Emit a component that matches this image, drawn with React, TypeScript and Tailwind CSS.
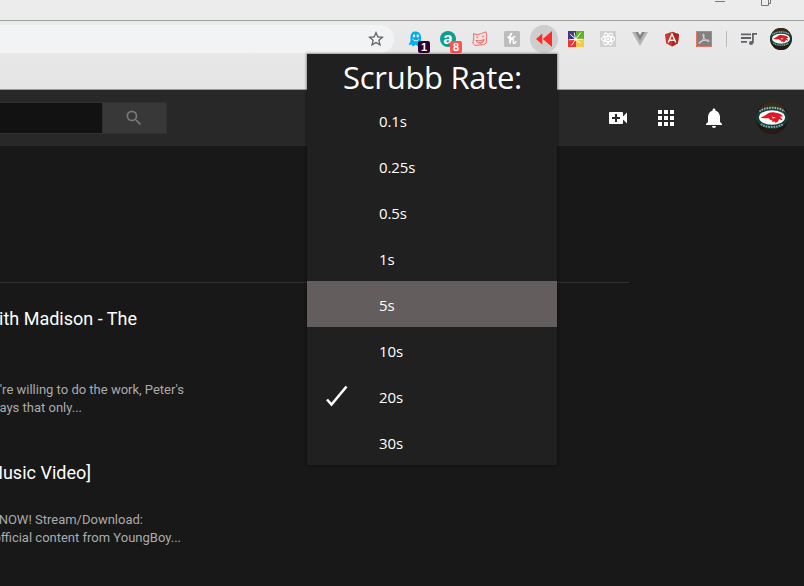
import React from 'react';

const rates = ['0.1s', '0.25s', '0.5s', '1s', '5s', '10s', '20s', '30s'];

function Slot({ children }: { children: React.ReactNode }) {
  return <div className="relative flex h-8 w-8 shrink-0 items-center justify-center">{children}</div>;
}

function Badge({ label, className }: { label: string; className: string }) {
  return (
    <span
      className={`absolute top-[18px] left-[18px] flex h-3 w-3 items-center justify-center rounded-[2px] font-['Liberation_Sans',sans-serif] text-[11px] leading-none font-bold text-white ${className}`}
    >
      {label}
    </span>
  );
}

function Avatar({ size }: { size: number }) {
  return (
    <svg width={size} height={size} viewBox="0 0 32 32" className="shrink-0">
      <defs>
        <clipPath id={`round-${size}`}>
          <circle cx="16" cy="16" r="16" />
        </clipPath>
      </defs>
      <g clipPath={`url(#round-${size})`}>
        <rect width="32" height="32" fill="#20140e" />
        <path d="M9 0h15l5 7H3z" fill="#3d2b17" />
        <path d="M5 27h22l-4 5H8z" fill="#2c1a12" />
        <ellipse cx="16" cy="15.500" rx="16" ry="11.500" fill="#123f3b" />
        <path d="M3.500 9.500C9 4.500 23 4.500 28.500 9.500" fill="none" stroke="#9fb1ab" strokeWidth="2" strokeDasharray="1.700 .9" />
        <path d="M5 22C10 26 22 26 27 22" fill="none" stroke="#8fa39d" strokeWidth="2" strokeDasharray="1.700 .9" />
        <ellipse cx="16" cy="15.500" rx="13" ry="7.300" fill="#fbfbf8" />
        <path
          d="M4.500 15.500c2-.5 4-1.500 6-3 2-2 5-2.500 8-2 4 .3 7 1.500 8.500 4l-3.500.3c1.500.7 2.500 1.800 3 3.700l-3.500-1.500c-.3 2-1.500 3-3.500 4l-.5-1.500-3 .5.500-1.500c-2 0-2.500-1.500-4.500-2.500-2 .5-5 .5-7.500-.5z"
          fill="#df1726"
        />
        <path d="m15.500 14.500 4.500 1.300-3 .8z" fill="#fff" />
      </g>
    </svg>
  );
}

function Toolbar() {
  return (
    <div className="flex h-9 items-center">
      <div className="flex h-7 w-[394px] shrink-0 items-center justify-end rounded-r-full bg-[#f1f3f4] pr-[10px]">
        <svg width="16" height="16" viewBox="2 2 20 20" fill="#5f6368">
          <path d="m22 9.24-7.19-.62L12 2 9.19 8.63 2 9.24l5.46 4.73L5.82 21 12 17.27 18.18 21l-1.63-7.03L22 9.24zM12 15.4l-3.76 2.27 1-4.28-3.32-2.88 4.38-.38L12 6.1l1.71 4.04 4.38.38-3.32 2.88 1 4.28L12 15.4z" />
        </svg>
      </div>
      <div className="ml-[6px] flex">
        <Slot>
          <svg width="16" height="16" viewBox="0 0 16 16">
            <path d="M2.500 6c0-3.600 2-5.600 5-5.600S13 2.500 13 6v4l2 4-3-.6-2 1.800-2.500-1.500L5 15.500 3.500 13.500.500 14l2-4z" fill="#00aef0" />
            <ellipse cx="6" cy="4.800" rx="1.200" ry="1.600" fill="#fff" />
            <ellipse cx="9.800" cy="4.800" rx="1.200" ry="1.600" fill="#fff" />
            <path d="M4.800 8.200c1.500 2.200 4.800 2.200 6.200 0" fill="none" stroke="#fff" strokeWidth="1" />
          </svg>
          <Badge label="1" className="bg-[#300033]" />
        </Slot>
        <Slot>
          <span className="flex h-4 w-4 items-center justify-center rounded-full bg-[#0c9f8d] pb-[2px] font-['Liberation_Sans',sans-serif] text-[17px] leading-none font-bold text-white">
            a
          </span>
          <Badge label="8" className="bg-[#ff5252]" />
        </Slot>
        <Slot>
          <svg width="16" height="16" viewBox="0 0 16 16" fill="none" stroke="#e5706c" strokeWidth="1">
            <path d="M1.500 2.500 5 3.800l4.500-1.300L14 .8l.8 4-.6 7.200-2 1.500L3 14.500.8 12l1-5z" fill="#f6dedd" />
            <path d="M4.500 6.500 6 6.200m4.200-.6 1.600-.4" strokeWidth="1.300" />
            <path d="M4 9.300c2.200 1 5.500.5 8-.8-.2 4.200-6.300 5.300-8 .8z" fill="#e5706c" />
            <path d="M5.500 10.700c1.700.3 3.500.1 5-.7" stroke="#fff" strokeWidth=".8" />
          </svg>
        </Slot>
        <Slot>
          <svg width="16" height="16" viewBox="0 0 16 16">
            <rect width="16" height="16" rx="1.500" fill="#bdbdbd" />
            <path d="M4 6.200C6 5.500 8.200 2.700 7.200 2.400 6 2.300 6 8 5.800 12.600c.4-2.400 1.500-4.900 2.900-4.800 1.800.2-.3 4.600 1 4.800.9.100 1.700-.9 2.300-2M5 7.200c2 .2 4.500-.3 5.800-1.600" fill="none" stroke="#fff" strokeWidth="1.400" strokeLinecap="round" />
          </svg>
        </Slot>
        <Slot>
          <span className="flex h-7 w-7 items-center justify-center rounded-full bg-[#cecece]">
            <svg width="16" height="16" viewBox="0 0 16 16" fill="#ff2a2a">
              <path d="M0 8l6.300-5.500v11zM6.800 8 16 0v16z" />
            </svg>
          </span>
        </Slot>
        <Slot>
          <svg width="16" height="16" viewBox="0 0 16 16">
            <path d="M0 0h8v8H0z" fill="#463883" />
            <path d="M8 0h8v8H8z" fill="#5fb42c" />
            <path d="M0 8h8v8H0z" fill="#ef3434" />
            <path d="M8 8h8v8H8z" fill="#f4c94f" />
            <path d="M7.500 8 6.300 2M7 7.500 2.500 3.500M7 8.300 1.500 8.800M8 8l4.500-6M8 8.500l6.500-.3M8 8.500l4 3.300M7.500 8.500 3.800 14" stroke="#fff" strokeWidth="1" strokeLinecap="round" />
            <circle cx="7.500" cy="8.300" r="1.500" fill="#fff" />
          </svg>
        </Slot>
        <Slot>
          <svg width="16" height="16" viewBox="0 0 16 16" fill="none" stroke="#fff" strokeWidth="1.100">
            <rect width="16" height="16" fill="#d0d0d0" stroke="none" />
            <ellipse cx="8" cy="8" rx="6.500" ry="2.600" />
            <ellipse cx="8" cy="8" rx="6.500" ry="2.600" transform="rotate(60 8 8)" />
            <ellipse cx="8" cy="8" rx="6.500" ry="2.600" transform="rotate(120 8 8)" />
            <circle cx="8" cy="8" r="1.200" fill="#fff" stroke="none" />
          </svg>
        </Slot>
        <Slot>
          <svg width="16" height="14" viewBox="0 0 16 14">
            <path d="M0 0h6l2 3.500L10 0h6L8 14z" fill="#b5b5b5" />
            <path d="M3.200 0H6l2 3.500L10 0h2.800L8 8.500z" fill="#858585" />
          </svg>
        </Slot>
        <Slot>
          <svg width="16" height="16" viewBox="0 0 16 16">
            <path d="M8 .7 15 3.200l-1.100 9L8 15.500l-5.900-3.300L1 3.200z" fill="#c9372f" />
            <path d="M8 .7 15 3.200l-1.100 9L8 15.500z" fill="#aa2821" />
            <path d="M4.200 11.500 8 3l3.800 8.500M5.800 9.200h4.400" fill="none" stroke="#f4eeee" strokeWidth="1.500" />
          </svg>
        </Slot>
        <Slot>
          <svg width="16" height="16" viewBox="0 0 16 16">
            <rect x=".5" y=".5" width="15" height="15" fill="#847f7f" stroke="#e27464" />
            <path d="M3.300 12.500C5 12 8.500 7 8 4c-.3-1.800-1.500-1-1 .7.800 3 3.500 5.800 5.700 5.700 1.200-.3.400-1.500-1.200-1.400-3 .1-6 .8-8 2.200-1 .9-.8 1.300-.2 1.300z" fill="none" stroke="#ddd" strokeWidth="1" />
          </svg>
        </Slot>
      </div>
      <div className="ml-[6px] h-4 w-px bg-[#bcbcbc]" />
      <svg className="ml-[13px]" width="18" height="18" viewBox="0 0 18 18" fill="none" stroke="#5f6368" strokeWidth="1.800">
        <path d="M1 4.300h10M1 8h10M1 11.800h6M12.900 13V3.900H17" />
        <circle cx="11.100" cy="13" r="2.100" fill="#5f6368" stroke="none" />
      </svg>
      <div className="ml-3"><Avatar size={22} /></div>
    </div>
  );
}

function BrowserChrome() {
  return (
    <header className="h-[90px] border-b border-[#999b99] bg-[#e5e5e5]">
      <div className="flex h-[21px] items-start border-b border-[#9ea09e] bg-[#ececec] pl-[715px]">
        <div className="mt-px h-px w-[10px] bg-[#777]" />
        <svg className="ml-9" width="10" height="6" viewBox="0 0 10 6" fill="none" stroke="#777">
          <path d="M.5 0v5.500h7V0M9.500 0v3.500h-2" />
        </svg>
      </div>
      <div className="h-[68px] bg-linear-to-b from-[#ebebeb] to-[#e4e4e4]"><Toolbar /></div>
    </header>
  );
}

function SiteHeader() {
  return (
    <div className="flex h-14 items-center bg-[#282828]">
      <div className="h-8 w-[102px] border-y border-[#303030] bg-[#121212]" />
      <button className="flex h-8 w-[65px] items-center justify-center border border-[#303030] bg-[#383838] pr-[2px]">
        <svg width="20" height="20" viewBox="0 0 24 24" fill="#777">
          <path d="M15.500 14h-.79l-.28-.27A6.471 6.471 0 0 0 16 9.500 6.500 6.500 0 1 0 9.500 16c1.610 0 3.090-.59 4.230-1.570l.27.28v.79l5 4.990L20.490 19l-4.990-5zm-6 0C7.010 14 5 11.990 5 9.500S7.010 5 9.500 5 14 7.010 14 9.500 11.990 14 9.500 14z" />
        </svg>
      </button>
      <div className="ml-auto flex items-center gap-6 pr-4">
        <svg width="24" height="24" viewBox="0 0 24 24" fill="#fff">
          <path d="M17 10.500V7c0-.55-.45-1-1-1H4c-.55 0-1 .45-1 1v10c0 .55.45 1 1 1h12c.55 0 1-.45 1-1v-3.500l4 4v-11l-4 4zM14 13h-3v3H9v-3H6v-2h3V8h2v3h3v2z" />
        </svg>
        <svg width="24" height="24" viewBox="0 0 24 24" fill="#fff">
          <path d="M4 8h4V4H4v4zm6 12h4v-4h-4v4zm-6 0h4v-4H4v4zm0-6h4v-4H4v4zm6 0h4v-4h-4v4zm6-10v4h4V4h-4zm-6 4h4V4h-4v4zm6 6h4v-4h-4v4zm0 6h4v-4h-4v4z" />
        </svg>
        <svg width="24" height="24" viewBox="0 0 24 24" fill="#fff">
          <path d="M12 22c1.100 0 2-.9 2-2h-4c0 1.100.89 2 2 2zm6-6v-5c0-3.070-1.640-5.640-4.500-6.320V4c0-.83-.67-1.500-1.500-1.500s-1.500.67-1.500 1.500v.68C7.630 5.360 6 7.920 6 11v5l-2 2v1h16v-1l-2-2z" />
        </svg>
        <div className="ml-[6px]"><Avatar size={32} /></div>
      </div>
    </div>
  );
}

/* A line whose last glyph ends at the box's right edge. */
function Line({ children, className }: { children: string; className: string }) {
  return <div className={`flex justify-end whitespace-nowrap ${className}`}>{children}</div>;
}

function Results() {
  return (
    <div className="pt-[136px]">
      <div className="h-px w-[629px] bg-[#303030]" />
      <Line className="mt-6 w-[137px] text-lg leading-6 text-white">ith Madison - The</Line>
      <Line className="mt-[50px] w-[184px] text-[13px] leading-[18px] text-[#aaa]">'re willing to do the work, Peter's</Line>
      <Line className="w-[82px] text-[13px] leading-[18px] text-[#aaa]">ays that only...</Line>
      <Line className="mt-11 w-[91px] text-lg leading-6 text-white">Music Video]</Line>
      <Line className="mt-[26px] w-[143px] text-[13px] leading-[18px] text-[#aaa]">NOW! Stream/Download:</Line>
      <Line className="w-[181px] text-[13px] leading-[18px] text-[#aaa]">official content from YoungBoy...</Line>
    </div>
  );
}

function RatePopup() {
  return (
    <div className="absolute top-[54px] left-[307px] h-[411px] w-[250px] bg-[#202020] font-['Open_Sans','Noto_Sans',sans-serif] text-white shadow-[0_0_2px_1px_rgba(0,0,0,0.35)]">
      <h1 className="h-[43px] pl-px text-center text-[31px] leading-[47px] tracking-[-0.3px] whitespace-nowrap">Scrubb Rate:</h1>
      <ul>
        {rates.map((rate) => (
          <li key={rate} className={`flex h-[46px] items-center pt-[2px] pl-[18px] text-[15px] tracking-[-0.1px] ${rate === '5s' ? 'bg-[#635e5d]' : ''}`}>
            <span className="w-[54px]">
              {rate === '20s' && (
                <svg width="24" height="24" viewBox="0 0 24 24" fill="none" stroke="#fff" strokeWidth="2.600">
                  <path d="m2 14.500 4.500 5L21.500 1.500" />
                </svg>
              )}
            </span>
            <span className="leading-5">{rate}</span>
          </li>
        ))}
      </ul>
    </div>
  );
}

export default function App() {
  return (
    <div className="relative h-[586px] w-[804px] overflow-hidden bg-[#181818] font-['Roboto',sans-serif]">
      <BrowserChrome />
      <SiteHeader />
      <Results />
      <RatePopup />
    </div>
  );
}
